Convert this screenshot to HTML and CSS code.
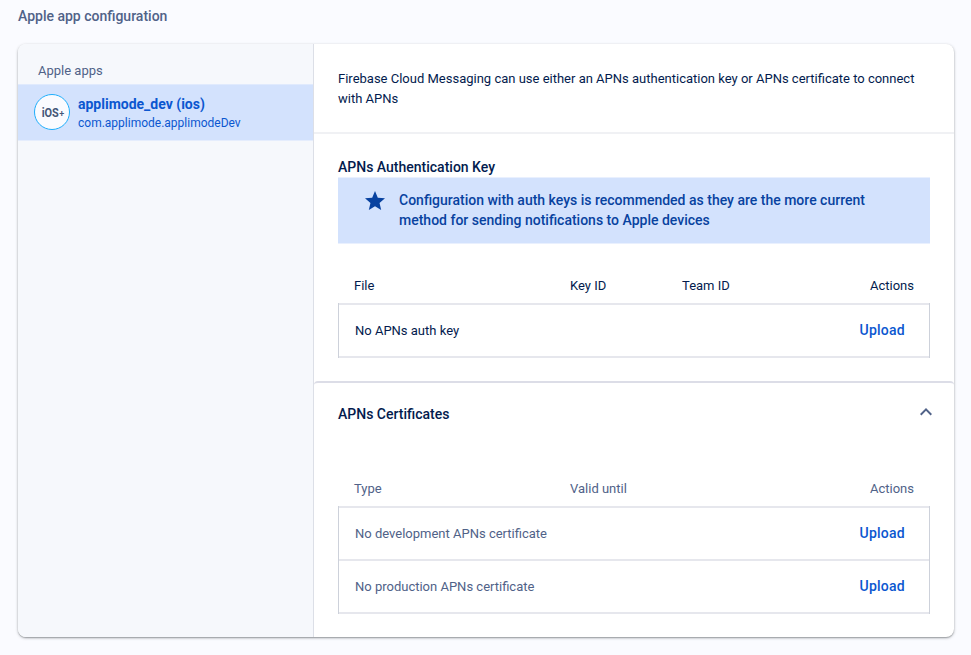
FILE: index.html
```html
<!DOCTYPE html>
<html lang="en">
<head>
<meta charset="utf-8">
<title>Apple app configuration</title>
<link rel="stylesheet" href="styles.css">
</head>
<body>
<h1 class="page-title">Apple app configuration</h1>
<main class="card">
  <aside class="sidebar">
    <h2 class="sidebar-title">Apple apps</h2>
    <a class="app">
      <span class="app-icon"><span class="ios">iOS</span><span class="plus">+</span></span>
      <span class="app-text">
        <span class="app-name">applimode_dev (ios)</span>
        <span class="app-id">com.applimode.applimodeDev</span>
      </span>
    </a>
  </aside>
  <div class="content">
    <p class="intro">Firebase Cloud Messaging can use either an APNs authentication key or APNs certificate to connect with APNs</p>
    <section class="auth">
      <h3 class="heading">APNs Authentication Key</h3>
      <div class="notice">
        <svg class="star" viewBox="0 0 24 24"><path d="M12 17.27 18.18 21l-1.64-7.03L22 9.24l-7.19-.61L12 2 9.19 8.63 2 9.24l5.46 4.73L5.82 21z"/></svg>
        <p class="notice-text">Configuration with auth keys is recommended as they are the more current method for sending notifications to Apple devices</p>
      </div>
      <div class="columns"><span class="c1">File</span><span class="c2">Key ID</span><span>Team ID</span><span class="end">Actions</span></div>
      <div class="rows">
        <div class="row"><span>No APNs auth key</span><a class="upload">Upload</a></div>
      </div>
    </section>
    <section class="certs">
      <div class="certs-head">
        <h3 class="heading">APNs Certificates</h3>
        <svg class="chevron" viewBox="0 0 24 24"><path d="M12 8l-6 6 1.41 1.41L12 10.83l4.59 4.58L18 14z"/></svg>
      </div>
      <div class="columns"><span class="c1">Type</span><span>Valid until</span><span class="end">Actions</span></div>
      <div class="rows">
        <div class="row"><span>No development APNs certificate</span><a class="upload">Upload</a></div>
        <div class="row"><span>No production APNs certificate</span><a class="upload">Upload</a></div>
      </div>
    </section>
  </div>
</main>
</body>
</html>
```

FILE: styles.css
```css
* { box-sizing: border-box; }
body {
  margin: 0;
  height: 655px;
  padding: 6px 17px 0 18px;
  background: #fafbff;
  color: #031b4e;
  font: 400 13px/20px Roboto, sans-serif;
  overflow: hidden;
}
h1, h2, h3, p { margin: 0; }
.page-title {
  margin-bottom: 18px;
  color: #506288;
  font-size: 14px;
  font-weight: 500;
  line-height: 20px;
}
.card {
  display: flex;
  width: 936px;
  height: 593px;
  border-radius: 8px;
  background: #fff;
  box-shadow: 0 1px 1px rgba(60, 64, 67, .25), 0 1px 3px rgba(60, 64, 67, .4);
}
.sidebar {
  flex: 0 0 296px;
  border-right: 1px solid #dcdfe7;
  border-radius: 8px 0 0 8px;
  background: #f6f8fc;
}
.sidebar-title {
  padding: 17px 20px 3px;
  height: 40px;
  color: #506288;
  font-size: 13px;
  font-weight: 400;
}
.app {
  display: flex;
  align-items: flex-start;
  gap: 8px;
  height: 57px;
  padding: 9px 16px 0;
  background: #d3e2fd;
  border-top: 1px solid #e0eafd;
  border-bottom: 1px solid #e5edfd;
  color: #0b57d0;
}
.app-icon {
  display: flex;
  align-items: center;
  justify-content: center;
  width: 36px;
  height: 36px;
  margin-top: .4px;
  padding: 2px 0 0 2px;
  border: 1px solid #1eaefc;
  border-radius: 50%;
  background: #fafbff;
  color: #455778;
  font-weight: 700;
  line-height: 16px;
}
.ios { font-size: 13px; transform: scaleX(.84); margin: 0 -1.5px; }
.plus { font-size: 9px; font-weight: 500; margin-top: 1px; }
.app-name, .app-id { display: block; }
.app-name { font-size: 14px; font-weight: 700; line-height: 20px; }
.app-id { font-size: 12px; line-height: 18px; }
.content { flex: 1; }
.intro {
  height: 90px;
  padding: 25px 24px 0;
  border-bottom: 2px solid #f0f1f4;
}
.auth { height: 247px; padding: 23px 24px 0; }
.heading { font-size: 14px; font-weight: 500; line-height: 20px; }
.notice {
  display: flex;
  height: 67px;
  padding: 12px 60px 0 25px;
  border: solid #e9f0fe;
  border-width: 1px 0;
  background: #d3e2fd;
  color: #0842a0;
}
.star { flex: none; width: 24px; height: 24px; margin: -1px 12px 0 0; fill: #0842a0; }
.notice-text { font-size: 14px; font-weight: 500; }
.columns {
  display: flex;
  height: 60px;
  padding: 33px 16px 0;
}
.notice + .columns { height: 59px; padding-top: 32px; }
.c1 { width: 216px; }
.c2 { width: 112px; }
.end { margin-left: auto; }
.rows {
  border: 1px solid #cdd1da;
  border-width: 0 1px;
}
.row {
  display: flex;
  justify-content: space-between;
  height: 55px;
  padding: 16px 24px 0 16px;
  border: solid #e6e7ed;
  border-width: 2px 0;
}
.row + .row { margin-top: -2px; }
.upload {
  margin-top: -1px;
  color: #0b57d0;
  font-size: 14px;
  font-weight: 500;
  letter-spacing: .25px;
}
.certs {
  height: 256px;
  padding: 21px 24px 0;
  border-top: 2px solid #dcdde7;
  border-radius: 4px 4px 8px 0;
  color: #506288;
}
.certs-head {
  display: flex;
  justify-content: space-between;
  height: 42px;
  color: #031b4e;
}
.chevron { width: 24px; height: 24px; margin: -4.5px -8px 0 0; fill: #506288; }
```
